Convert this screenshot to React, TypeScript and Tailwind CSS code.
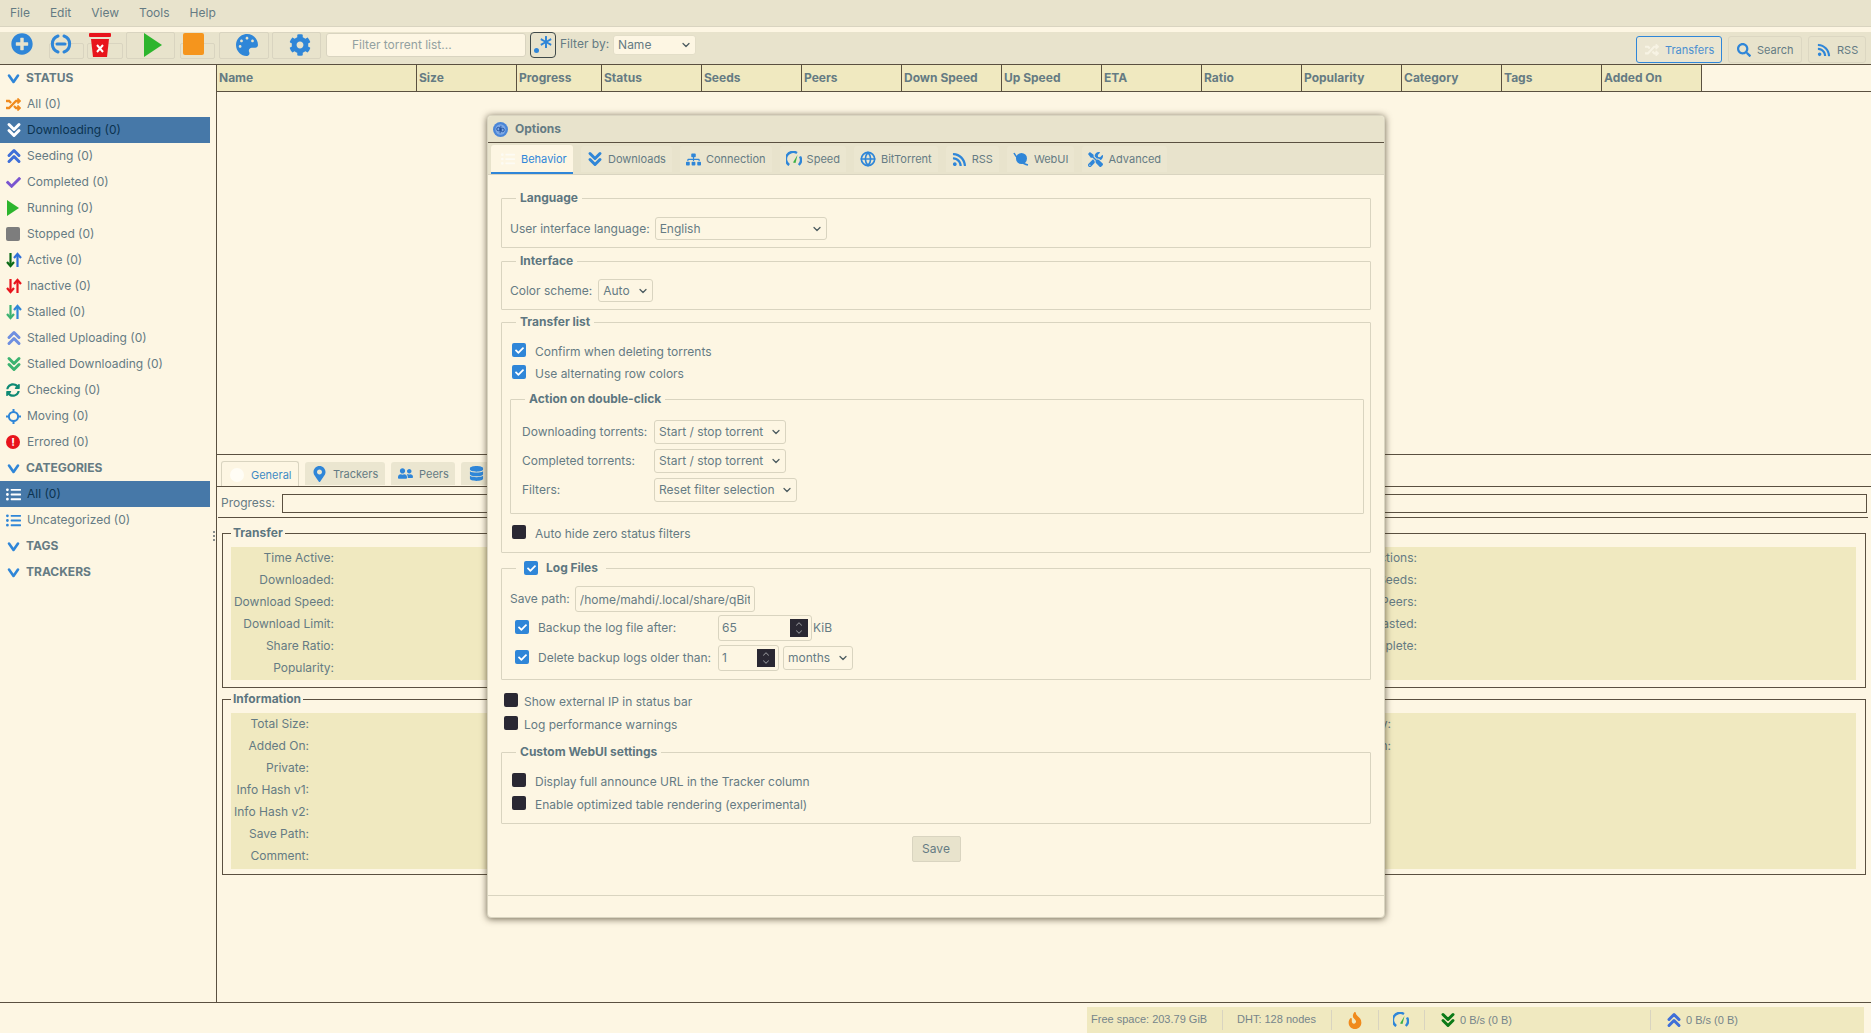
import type { ReactNode } from 'react'
import {
  FaPlusCircle,
  FaPalette,
  FaCog,
  FaCheck,
  FaRandom,
  FaSearch,
  FaRss,
  FaMapMarkerAlt,
  FaUserFriends,
  FaDatabase,
  FaSitemap,
  FaTools,
  FaSyncAlt,
  FaListUl,
  FaFire,
  FaAsterisk,
} from 'react-icons/fa'
import { FiGlobe } from 'react-icons/fi'
import { LuChevronDown, LuChevronUp } from 'react-icons/lu'

// Small drawn icons
function DoubleChevron({ up, color, size = 16 }: { up?: boolean; color: string; size?: number }) {
  return (
    <svg className="shrink-0" width={size} height={size} viewBox="0 0 16 16" fill="none" stroke={color} strokeWidth="3" strokeLinecap="round" strokeLinejoin="round">
      {up ? (
        <>
          <polyline points="3,7.5 8,2.5 13,7.5" />
          <polyline points="3,13.5 8,8.5 13,13.5" />
        </>
      ) : (
        <>
          <polyline points="3,2.5 8,7.5 13,2.5" />
          <polyline points="3,8.5 8,13.5 13,8.5" />
        </>
      )}
    </svg>
  )
}

function Arrows({ down, up }: { down: string; up: string }) {
  return (
    <svg className="shrink-0" width="16" height="16" viewBox="0 0 16 16" fill="none" strokeWidth="2.2">
      <g stroke={down}>
        <line x1="4.5" y1="1" x2="4.5" y2="14" />
        <polyline points="1,10 4.5,14 8,10" />
      </g>
      <g stroke={up}>
        <line x1="11.5" y1="15" x2="11.5" y2="2" />
        <polyline points="8,6 11.5,2 15,6" />
      </g>
    </svg>
  )
}

function Chevron({ color = '#2f86d8' }: { color?: string }) {
  return (
    <svg width="13" height="13" viewBox="0 0 13 13" fill="none" stroke={color} strokeWidth="2.6" strokeLinecap="round" strokeLinejoin="round">
      <polyline points="2,3.5 6.5,10 11,3.5" />
    </svg>
  )
}

function Gauge({ size = 16 }: { size?: number }) {
  return (
    <svg className="shrink-0" width={size} height={size} viewBox="0 0 16 16" fill="none">
      <path d="M3.2 14 A7 7 0 0 1 11 2" stroke="#2f86d8" strokeWidth="2.4" />
      <path d="M14 5.5 A7 7 0 0 1 12.8 14" stroke="#2f86d8" strokeWidth="2.4" />
      <path d="M11.5 4 L7 11.5 L9.5 12 Z" fill="#3cb043" />
    </svg>
  )
}

function Planet() {
  return (
    <svg className="shrink-0" width="16" height="16" viewBox="0 0 16 16" fill="none">
      <circle cx="8.5" cy="7.5" r="5.5" fill="#2f86d8" />
      <path d="M1 2 C3 6 9 13 15 14" stroke="#2f86d8" strokeWidth="1.6" />
    </svg>
  )
}

function QbLogo() {
  return (
    <svg width="15" height="15" viewBox="0 0 16 16">
      <circle cx="8" cy="8" r="8" fill="#4a86d8" />
      <circle cx="8" cy="8" r="5.5" fill="#7fa9e4" />
      <circle cx="5.8" cy="7.5" r="1.8" fill="none" stroke="#1f4f9f" strokeWidth="1" />
      <circle cx="10.2" cy="8.5" r="1.8" fill="none" stroke="#1f4f9f" strokeWidth="1" />
      <line x1="7.6" y1="6" x2="7.6" y2="12" stroke="#1f4f9f" strokeWidth="1" />
      <line x1="8.4" y1="4" x2="8.4" y2="10" stroke="#1f4f9f" strokeWidth="1" />
    </svg>
  )
}

function LinkCircle() {
  return (
    <svg width="22" height="22" viewBox="0 0 22 22" fill="none" stroke="#2f86d8" strokeWidth="3" strokeLinecap="round">
      <path d="M8 3 A8.5 8.5 0 0 0 8 19" />
      <path d="M14 3 A8.5 8.5 0 0 1 14 19" />
      <line x1="7" y1="11" x2="15" y2="11" />
    </svg>
  )
}

function TrashRed() {
  return (
    <svg width="22" height="24" viewBox="0 0 22 24">
      <rect x="0" y="0" width="22" height="4" rx="1" fill="#e8141c" />
      <path d="M2 6 H20 L18 24 H4 Z" fill="#e8141c" />
      <path d="M8 12 L14 19 M14 12 L8 19" stroke="#fff" strokeWidth="2" />
    </svg>
  )
}

function Sync() {
  return (
    <span className="relative block h-[14px] w-[14px]">
      <FaSyncAlt className="h-[14px] w-[14px] text-[#0f8a74]" />
    </span>
  )
}

// Small form bits
function Check({ on, className = '' }: { on?: boolean; className?: string }) {
  if (on) {
    return (
      <span className={`flex h-[14px] w-[14px] shrink-0 items-center justify-center rounded-[2px] bg-[#2f86d8] ${className}`}>
        <FaCheck className="h-[9px] w-[9px] text-white" />
      </span>
    )
  }
  return <span className={`block h-[14px] w-[14px] shrink-0 rounded-[2px] bg-[#2a2833] ${className}`} />
}

function CheckRow({ on, label, gap = 'gap-[9px]' }: { on?: boolean; label: string; gap?: string }) {
  return (
    <div className={`flex h-[22px] items-center ${gap}`}>
      <Check on={on} className="mb-[4px]" />
      <span>{label}</span>
    </div>
  )
}

function Select({ text, className = '' }: { text: string; className?: string }) {
  return (
    <div className={`flex shrink-0 items-center justify-between whitespace-nowrap rounded-[3px] border border-[#d9d4c0] pl-[4px] pr-[3px] ${className}`}>
      <span>{text}</span>
      <LuChevronDown className="h-[12px] w-[12px] text-[#4c5c60]" strokeWidth={2.5} />
    </div>
  )
}

function Spinner() {
  return (
    <span className="flex h-[18px] w-[18px] flex-col items-center justify-center bg-[#2a2833] text-[#8d8f94]">
      <LuChevronUp className="-mb-[1px] h-[10px] w-[12px]" strokeWidth={2.5} />
      <LuChevronDown className="-mt-[1px] h-[10px] w-[12px]" strokeWidth={2.5} />
    </span>
  )
}

function Box({ title, children, className = '', legend = 'ml-[6px]' }: { title: ReactNode; children: ReactNode; className?: string; legend?: string }) {
  return (
    <fieldset className={`rounded-[1px] border border-[#d9d4c0] ${className}`}>
      <legend className={`flex h-[16px] items-center px-[4px] font-bold text-[#5d7680] ${legend}`}>{title}</legend>
      {children}
    </fieldset>
  )
}

const statusRows = [
  { label: 'All (0)', icon: <FaRandom className="h-[15px] w-[15px] text-[#f08a1d]" /> },
  { label: 'Downloading (0)', icon: <DoubleChevron color="#ffffff" />, active: true },
  { label: 'Seeding (0)', icon: <DoubleChevron up color="#3f6fd8" /> },
  { label: 'Completed (0)', icon: <FaCheck className="h-[15px] w-[15px] text-[#7a55d0]" /> },
  {
    label: 'Running (0)',
    icon: (
      <svg width="14" height="16" viewBox="0 0 14 16">
        <path d="M1 0 L13 8 L1 16 Z" fill="#2db52d" />
      </svg>
    ),
  },
  { label: 'Stopped (0)', icon: <span className="block h-[14px] w-[14px] rounded-[2px] bg-[#7d7d7d]" /> },
  { label: 'Active (0)', icon: <Arrows down="#0c6b18" up="#2f6fd8" /> },
  { label: 'Inactive (0)', icon: <Arrows down="#e8141c" up="#e8141c" /> },
  { label: 'Stalled (0)', icon: <Arrows down="#3cb371" up="#2f86d8" /> },
  { label: 'Stalled Uploading (0)', icon: <DoubleChevron up color="#6f8fe0" /> },
  { label: 'Stalled Downloading (0)', icon: <DoubleChevron color="#3cb371" /> },
  { label: 'Checking (0)', icon: <Sync /> },
  {
    label: 'Moving (0)',
    icon: (
      <svg width="15" height="15" viewBox="0 0 15 15" fill="none" stroke="#2f86d8">
        <circle cx="7.5" cy="7.5" r="4.6" strokeWidth="2" />
        <path d="M7.5 0 V3 M7.5 12 V15 M0 7.5 H3 M12 7.5 H15" strokeWidth="2" />
      </svg>
    ),
  },
  {
    label: 'Errored (0)',
    icon: (
      <span className="flex h-[14px] w-[14px] items-center justify-center rounded-full bg-[#e8141c] text-[11px] font-bold text-white">!</span>
    ),
  },
]

const columns = [
  { name: 'Name', width: 'w-[200px]' },
  { name: 'Size', width: 'w-[100px]' },
  { name: 'Progress', width: 'w-[85px]' },
  { name: 'Status', width: 'w-[100px]' },
  { name: 'Seeds', width: 'w-[100px]' },
  { name: 'Peers', width: 'w-[100px]' },
  { name: 'Down Speed', width: 'w-[100px]' },
  { name: 'Up Speed', width: 'w-[100px]' },
  { name: 'ETA', width: 'w-[100px]' },
  { name: 'Ratio', width: 'w-[100px]' },
  { name: 'Popularity', width: 'w-[100px]' },
  { name: 'Category', width: 'w-[100px]' },
  { name: 'Tags', width: 'w-[100px]' },
  { name: 'Added On', width: 'w-[100px]' },
]

const transferRows = [
  ['Time Active:', 'Connections:'],
  ['Downloaded:', 'Seeds:'],
  ['Download Speed:', 'Peers:'],
  ['Download Limit:', 'Wasted:'],
  ['Share Ratio:', 'Last Seen Complete:'],
  ['Popularity:', ''],
]

const infoRows = [
  ['Total Size:', 'Created By:'],
  ['Added On:', 'Created On:'],
  ['Private:', ''],
  ['Info Hash v1:', ''],
  ['Info Hash v2:', ''],
  ['Save Path:', ''],
  ['Comment:', ''],
]

const optionTabs = [
  { label: 'Downloads', icon: <DoubleChevron color="#2f86d8" /> },
  { label: 'Connection', icon: <FaSitemap className="h-[15px] w-[15px] shrink-0 text-[#2f86d8]" /> },
  { label: 'Speed', icon: <Gauge /> },
  { label: 'BitTorrent', icon: <FiGlobe className="h-[16px] w-[16px] shrink-0 text-[#2f86d8]" strokeWidth={2.5} /> },
  { label: 'RSS', icon: <FaRss className="h-[15px] w-[15px] shrink-0 text-[#2f86d8]" /> },
  { label: 'WebUI', icon: <Planet /> },
  { label: 'Advanced', icon: <FaTools className="h-[15px] w-[15px] shrink-0 text-[#2f86d8]" /> },
]

function OptionsWindow() {
  return (
    <div className="absolute left-[487px] top-[115px] z-10 flex h-[803px] w-[898px] flex-col rounded-[4px] border border-[#d9d4c0] bg-[#fdf6e3] shadow-[0_1px_7px_rgba(60,50,30,0.75)]">
      <div className="flex h-[27px] items-center gap-[7px] rounded-t-[4px] border-b border-[#5a5040] bg-[#e8e3cc] pl-[5px] font-bold text-[#657b83]">
        <QbLogo />
        <span>Options</span>
      </div>
      <div className="flex h-[32px] items-end border-b border-[#d9d4c0] bg-[#e8e3cc] pl-[3px] text-[11px]">
        <div className="mr-[8px] flex h-[29px] w-[82px] items-center gap-[6px] rounded-t-[3px] border-b-2 border-[#2f86d8] bg-[#fdf6e3] pl-[10px] text-[#2f86d8]">
          <FaListUl className="h-[14px] w-[14px] text-[#fdfbf4]" />
          <span>Behavior</span>
        </div>
        {optionTabs.map((tab) => (
          <div key={tab.label} className="mb-[2px] mr-[8px] flex h-[26px] items-center gap-[5px] rounded-t-[3px] bg-[#ebe6d0] px-[6px]">
            {tab.icon}
            <span>{tab.label}</span>
          </div>
        ))}
      </div>

      <div className="flex flex-col px-[13px] pt-[15px]">
        <Box title="Language" className="px-[8px] pb-[7px] pt-[11px]">
          <div className="flex items-center gap-[5px]">
            <span>User interface language:</span>
            <Select text="English" className="h-[23px] w-[172px]" />
          </div>
        </Box>

        <Box title="Interface" className="mt-[5px] px-[8px] pb-[7px] pt-[10px]">
          <div className="flex items-center gap-[6px]">
            <span>Color scheme:</span>
            <Select text="Auto" className="h-[23px] w-[55px]" />
          </div>
        </Box>

        <Box title="Transfer list" legend="ml-[4px]" className="mt-[4px] pb-[7px] pl-[10px] pr-[6px] pt-[11px]">
          <CheckRow on label="Confirm when deleting torrents" />
          <CheckRow on label="Use alternating row colors" />
          <Box title="Action on double-click" legend="ml-[3px]" className="-ml-[2px] mt-[6px] pb-[11px] pl-[11px] pt-[13px]">
            <div className="flex flex-col gap-[5px]">
              <div className="flex items-center">
                <span className="w-[132px]">Downloading torrents:</span>
                <Select text="Start / stop torrent" className="h-[24px] w-[132px]" />
              </div>
              <div className="flex items-center">
                <span className="w-[132px]">Completed torrents:</span>
                <Select text="Start / stop torrent" className="h-[24px] w-[132px]" />
              </div>
              <div className="flex items-center">
                <span className="w-[132px]">Filters:</span>
                <Select text="Reset filter selection" className="h-[24px] w-[143px]" />
              </div>
            </div>
          </Box>
          <div className="mt-[9px]">
            <CheckRow on={false} label="Auto hide zero status filters" />
          </div>
        </Box>

        <fieldset className="mt-[7px] rounded-[1px] border border-[#d9d4c0] pb-[8px] pl-[8px] pt-[10px]">
          <legend className="ml-[6px] flex h-[16px] items-center gap-[8px] px-[8px] font-bold text-[#5d7680]">
            <Check on />
            <span>Log Files</span>
          </legend>
          <div className="flex items-center gap-[5px]">
            <span>Save path:</span>
            <input
              readOnly
              defaultValue="/home/mahdi/.local/share/qBittorrent/logs"
              className="h-[26px] w-[180px] rounded-[3px] border border-[#d9d4c0] bg-transparent px-[4px] outline-none"
            />
          </div>
          <div className="mt-[3px] flex h-[26px] items-center pl-[5px]">
            <Check on className="mb-[2px]" />
            <span className="ml-[9px] w-[180px]">Backup the log file after:</span>
            <div className="flex h-[26px] w-[94px] items-center justify-between rounded-[3px] border border-[#d9d4c0] pl-[3px] pr-[3px]">
              <span>65</span>
              <Spinner />
            </div>
            <span className="ml-[1px]">KiB</span>
          </div>
          <div className="mt-[4px] flex h-[26px] items-center pl-[5px]">
            <Check on className="mb-[2px]" />
            <span className="ml-[9px] w-[180px]">Delete backup logs older than:</span>
            <div className="flex h-[26px] w-[61px] items-center justify-between rounded-[3px] border border-[#d9d4c0] pl-[3px] pr-[3px]">
              <span>1</span>
              <Spinner />
            </div>
            <Select text="months" className="ml-[4px] h-[24px] w-[70px]" />
          </div>
        </fieldset>

        <div className="mt-[11px] pl-[3px]">
          <CheckRow on={false} label="Show external IP in status bar" gap="gap-[6px]" />
          <div className="mt-[1px]">
            <CheckRow on={false} label="Log performance warnings" gap="gap-[6px]" />
          </div>
        </div>

        <Box title="Custom WebUI settings" legend="ml-[4px]" className="mt-[8px] pb-[7px] pl-[10px] pt-[11px]">
          <CheckRow on={false} label="Display full announce URL in the Tracker column" />
          <div className="mt-[1px]">
            <CheckRow on={false} label="Enable optimized table rendering (experimental)" />
          </div>
        </Box>

        <div className="mt-[12px] flex justify-center">
          <button className="h-[26px] w-[49px] rounded-[2px] border border-[#d9d4c0] bg-[#e8e3cc] text-[#657b83]">Save</button>
        </div>
      </div>

      <div className="mt-auto h-[22px] border-t border-[#d9d4c0]" />
    </div>
  )
}

export default function App() {
  return (
    <div className="relative flex h-[1033px] w-[1871px] flex-col overflow-hidden bg-[#fdf6e3] font-[Inter,sans-serif] text-[12px] leading-[16px] text-[#657b83]">
      {/* Menu */}
      <div className="flex h-[27px] shrink-0 items-center gap-[20px] border-b border-[#d9d4c0] bg-[#e8e3cc] pl-[10px]">
        {['File', 'Edit', 'View', 'Tools', 'Help'].map((m) => (
          <span key={m}>{m}</span>
        ))}
      </div>
      <div className="h-[5px] shrink-0" />

      {/* Toolbar */}
      <div className="relative flex h-[32px] shrink-0 items-start bg-[#e8e3cc]">
        <span className="ml-[11px] mt-[1px] w-[38px]">
          <FaPlusCircle className="h-[22px] w-[22px] text-[#2f86d8]" />
        </span>
        <div className="relative mt-[11px] h-[16px] w-[35px] rounded-[2px] border border-[#d9d4c0]">
          <span className="absolute -top-[11px] left-0">
            <LinkCircle />
          </span>
        </div>
        <div className="relative ml-[3px] mt-[11px] h-[16px] w-[36px] rounded-[2px] border border-[#d9d4c0]">
          <span className="absolute -top-[11px] left-[1px]">
            <TrashRed />
          </span>
        </div>
        <div className="relative ml-[3px] h-[27px] w-[49px] rounded-[2px] border border-[#d9d4c0]">
          <span className="absolute left-[17px] top-0">
            <svg width="18" height="24" viewBox="0 0 18 24">
              <path d="M0 0 L18 12 L0 24 Z" fill="#2db52d" />
            </svg>
          </span>
        </div>
        <div className="relative ml-[5px] mt-[11px] h-[16px] w-[35px] rounded-[2px] border border-[#d9d4c0]">
          <span className="absolute -top-[11px] left-[2px] block h-[22px] w-[21px] rounded-[2px] bg-[#f5951d]" />
        </div>
        <div className="relative ml-[4px] h-[27px] w-[50px] rounded-[2px] border border-[#d9d4c0]">
          <FaPalette className="absolute left-[16px] top-[1px] h-[22px] w-[22px] text-[#2f86d8]" />
        </div>
        <div className="relative ml-[3px] h-[27px] w-[49px] rounded-[2px] border border-[#d9d4c0]">
          <FaCog className="absolute left-[16px] top-[1px] h-[22px] w-[22px] text-[#2f86d8]" />
        </div>
        <input
          placeholder="Filter torrent list..."
          className="ml-[5px] mt-[1px] h-[24px] w-[200px] rounded-[3px] border border-[#d9d4c0] bg-[#fdf6e3] pb-[2px] pl-[25px] outline-none placeholder:text-[#93a1a1]"
        />
        <div className="relative ml-[4px] h-[26px] w-[26px] rounded-[4px] border border-[#3f4a4a] bg-[#e8e3cc]">
          <FaAsterisk className="absolute left-[9px] top-[3px] h-[12px] w-[12px] text-[#2f86d8]" />
          <span className="absolute bottom-[4px] left-[3px] h-[5px] w-[5px] rounded-full bg-[#2f86d8]" />
        </div>
        <span className="ml-[4px] mt-[4px]">Filter by:</span>
        <Select text="Name" className="ml-[4px] mt-[3px] h-[20px] w-[83px] border-[#e3dec8] bg-[#fdf6e3]" />

        <div className="absolute right-[5px] top-[4px] flex gap-[6px] text-[11px]">
          <div className="flex h-[27px] w-[86px] items-center gap-[6px] rounded-[3px] border border-[#2f86d8] bg-[#ebe6d2] pl-[8px] text-[#4a8fd0]">
            <FaRandom className="h-[14px] w-[14px] text-[#f7f3e4]" />
            <span>Transfers</span>
          </div>
          <div className="flex h-[27px] w-[74px] items-center gap-[6px] rounded-[3px] border border-[#dcd7c2] pl-[8px]">
            <FaSearch className="h-[14px] w-[14px] text-[#2f86d8]" />
            <span>Search</span>
          </div>
          <div className="flex h-[27px] w-[58px] items-center gap-[6px] rounded-[3px] border border-[#dcd7c2] pl-[8px]">
            <FaRss className="h-[14px] w-[14px] text-[#2f86d8]" />
            <span>RSS</span>
          </div>
        </div>
      </div>

      {/* Main */}
      <div className="flex min-h-0 flex-1 border-t border-[#5a5040]">
        {/* Sidebar */}
        <aside className="relative w-[217px] shrink-0 border-r border-[#5a5040]">
          <div className="flex h-[26px] items-center gap-[6px] pl-[7px] font-bold">
            <Chevron />
            <span>STATUS</span>
          </div>
          {statusRows.map((row) => (
            <div
              key={row.label}
              className={`flex h-[26px] w-[210px] items-center ${row.active ? 'bg-[#4678a8] text-[#0b3350]' : ''}`}
            >
              <span className="flex w-[27px] shrink-0 pl-[6px]">{row.icon}</span>
              <span>{row.label}</span>
            </div>
          ))}
          <div className="flex h-[26px] items-center gap-[6px] pl-[7px] font-bold">
            <Chevron />
            <span>CATEGORIES</span>
          </div>
          <div className="flex h-[26px] w-[210px] items-center bg-[#4678a8] text-[#0b3350]">
            <span className="flex w-[27px] pl-[6px]">
              <FaListUl className="h-[15px] w-[15px] text-white" />
            </span>
            <span>All (0)</span>
          </div>
          <div className="flex h-[26px] w-[210px] items-center">
            <span className="flex w-[27px] pl-[6px]">
              <FaListUl className="h-[15px] w-[15px] text-[#2f86d8]" />
            </span>
            <span>Uncategorized (0)</span>
          </div>
          <div className="flex h-[26px] items-center gap-[6px] pl-[7px] font-bold">
            <Chevron />
            <span>TAGS</span>
          </div>
          <div className="flex h-[26px] items-center gap-[6px] pl-[7px] font-bold">
            <Chevron />
            <span>TRACKERS</span>
          </div>
          <div className="absolute right-[1px] top-[466px] flex flex-col gap-[2px]">
            <span className="h-[2px] w-[2px] bg-[#8a8f8c]" />
            <span className="h-[2px] w-[2px] bg-[#8a8f8c]" />
            <span className="h-[2px] w-[2px] bg-[#8a8f8c]" />
          </div>
        </aside>

        {/* Content */}
        <main className="flex min-w-0 flex-1 flex-col">
          <div className="h-[390px] shrink-0 border-b border-[#5a5040]">
            <div className="flex h-[27px] border-b border-[#5a5040]">
              {columns.map((col) => (
                <div key={col.name} className={`flex items-center border-r border-[#5a5040] bg-[#f0e9c0] pl-[2px] font-bold ${col.width}`}>
                  {col.name}
                </div>
              ))}
            </div>
          </div>

          {/* Details panel */}
          <div className="flex h-[32px] shrink-0 items-end gap-[6px] border-b border-[#5a5040] pl-[4px] pr-[4px] text-[11px]">
            <div className="flex h-[25px] w-[78px] items-center gap-[7px] rounded-t-[3px] border border-b-0 border-[#d9d4c0] pl-[8px] pt-[2px] text-[#3f8bc4]">
              <span className="h-[14px] w-[14px] rounded-full bg-[#fffdf5]" />
              <span>General</span>
            </div>
            <div className="mb-[1px] flex h-[23px] w-[80px] items-center gap-[7px] rounded-t-[3px] bg-[#ebe6d0] pl-[8px]">
              <FaMapMarkerAlt className="h-[16px] w-[13px] text-[#2f86d8]" />
              <span>Trackers</span>
            </div>
            <div className="mb-[1px] flex h-[23px] w-[64px] items-center gap-[6px] rounded-t-[3px] bg-[#ebe6d0] pl-[7px]">
              <FaUserFriends className="h-[15px] w-[15px] text-[#2f86d8]" />
              <span>Peers</span>
            </div>
            <div className="mb-[1px] flex h-[23px] w-[90px] items-center rounded-t-[3px] bg-[#ebe6d0] pl-[8px]">
              <FaDatabase className="h-[15px] w-[15px] text-[#2f86d8]" />
            </div>
          </div>
          <div className="ml-[1px] mr-[3px] flex h-[31px] shrink-0 items-start border-b border-[#5a5040] pl-[3px] pr-[1px] pt-[7px]">
            <span className="mt-[1px] w-[61px]">Progress:</span>
            <div className="h-[19px] flex-1 border border-[#5a5040]" />
          </div>

          <fieldset className="ml-[5px] mr-[5px] mt-[7px] h-[163px] border border-[#5a5040] pl-[8px] pr-[9px]">
            <legend className="flex h-[16px] items-center px-[2px] font-bold text-[#5d7680]">Transfer</legend>
            <div className="mt-[6px] grid grid-cols-[103px_1083px] bg-[#f0e9c0] pb-[1px]">
              {transferRows.map(([left, right]) => (
                <div key={left} className="contents">
                  <div className="flex h-[22px] items-center justify-end">{left}</div>
                  <div className="flex h-[22px] items-center justify-end">{right}</div>
                </div>
              ))}
            </div>
          </fieldset>

          <fieldset className="ml-[5px] mr-[5px] mt-[3px] h-[184px] border border-[#5a5040] pl-[8px] pr-[9px]">
            <legend className="flex h-[16px] items-center px-[2px] font-bold text-[#5d7680]">Information</legend>
            <div className="mt-[6px] grid grid-cols-[78px_1082px] bg-[#f0e9c0] pb-[2px]">
              {infoRows.map(([left, right]) => (
                <div key={left} className="contents">
                  <div className="flex h-[22px] items-center justify-end">{left}</div>
                  <div className="flex h-[22px] items-center justify-end">{right}</div>
                </div>
              ))}
            </div>
          </fieldset>
        </main>
      </div>

      {/* Status bar */}
      <div className="h-[31px] shrink-0 border-t border-[#5a5040] pt-[4px]">
        <div className="ml-[1087px] mr-[7px] flex h-[26px] items-center bg-[#f0e9c0] font-['Liberation_Sans',sans-serif] text-[11px] text-[#76858a]">
          <div className="flex h-[20px] w-[136px] items-center border-r border-[#d9d4c0] pb-[2px] pl-[4px]">Free space: 203.79 GiB</div>
          <div className="flex h-[20px] w-[109px] items-center border-r border-[#d9d4c0] pb-[2px] pl-[14px]">DHT: 128 nodes</div>
          <div className="flex h-[20px] w-[47px] items-center border-r border-[#d9d4c0] pl-[16px]">
            <FaFire className="h-[17px] w-[14px] text-[#f08a1d]" />
          </div>
          <div className="flex h-[20px] w-[46px] items-center border-r border-[#d9d4c0] pl-[14px]">
            <Gauge size={16} />
          </div>
          <div className="flex h-[20px] w-[226px] items-center gap-[4px] border-r border-[#d9d4c0] pl-[15px]">
            <DoubleChevron color="#0c7a18" />
            <span>0 B/s (0 B)</span>
          </div>
          <div className="flex h-[20px] items-center gap-[4px] pl-[15px]">
            <DoubleChevron up color="#3f6fd8" />
            <span>0 B/s (0 B)</span>
          </div>
        </div>
      </div>

      <OptionsWindow />
    </div>
  )
}
